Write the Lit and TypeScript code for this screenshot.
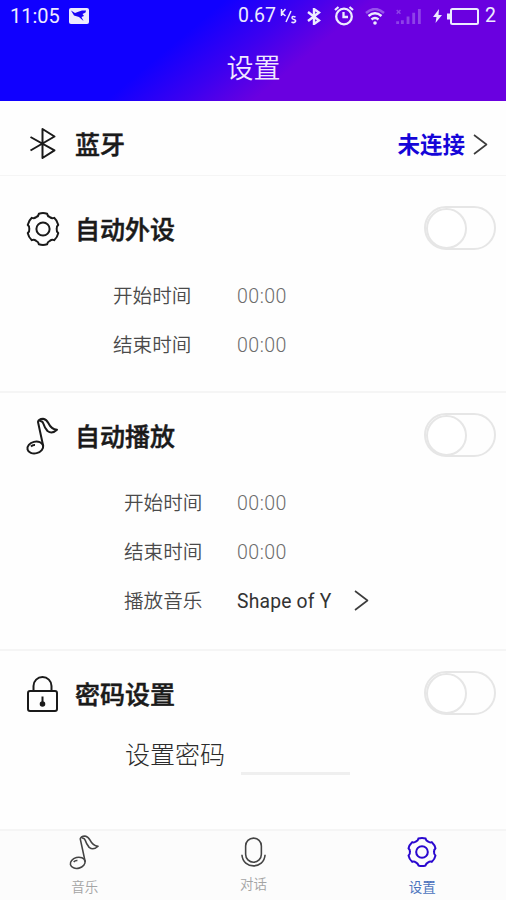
import { LitElement, html, css, svg, nothing } from "lit";
import { customElement, property } from "lit/decorators.js";

const CJK = css`Roboto, "Noto Sans CJK SC", sans-serif`;

// Outline of a six-lobed cog around (17, 17).
const polar = (deg: number, r: number) => {
  const a = (deg * Math.PI) / 180;
  return `${(17 + r * Math.sin(a)).toFixed(2)} ${(17 - r * Math.cos(a)).toFixed(2)}`;
};
const cog =
  [0, 60, 120, 180, 240, 300]
    .map(
      (d, i) =>
        `${i ? "L" : "M"}${polar(d - 15, 15.8)} Q${polar(d, 16.6)} ${polar(d + 15, 15.8)} Q${polar(d + 19, 13.6)} ${polar(d + 30, 13.7)} Q${polar(d + 41, 13.6)} ${polar(d + 45, 15.8)}`,
    )
    .join(" ") + " Z";

const shapes = {
  bluetooth: svg`<path d="M4.500 10 L28.500 23.300 L16.500 31 V2 L28.500 9.500 L4.500 23.500"/>`,
  gear: svg`<path d=${cog}/><circle cx="17" cy="17" r="6.600"/>`,
  note: svg`<ellipse cx="9.300" cy="29.500" rx="8" ry="5.800" transform="rotate(-14 9.300 29.500)"/><path d="M17.300 28.500 L12 4 Q12.500 1 17 .800 Q20.500 1.500 22.300 5 Q25.500 11.500 31 11.800 Q26 16.500 21.500 13 Q18.500 9.500 17.300 5.500 Q16.300 2.500 13.500 3 M5 28.500 Q6.500 26.800 9 27"/>`,
  lock: svg`<rect x="2" y="15" width="29" height="20" rx="2"/><path d="M7.500 15 V10 A9 9 0 0 1 25.500 10 V15"/><path d="M16.500 20.500 V27"/><circle cx="16.500" cy="28" r="1.800" fill="currentColor"/>`,
  mic: svg`<rect x="5" y="1" width="17" height="26" rx="8.500"/><path d="M1 19 C2 35 25 35 26 19"/>`,
  chevron: svg`<path d="M1 1 L13.500 10.500 L1 20"/>`,
};

@customElement("line-icon")
class LineIcon extends LitElement {
  @property() name: keyof typeof shapes = "gear";
  @property() box = "0 0 34 36";
  static styles = css`
    :host { display: block; flex: none; }
    svg { display: block; width: 100%; height: 100%; overflow: visible; fill: none;
      stroke: currentColor; stroke-width: var(--stroke, 2); stroke-linejoin: round; }
  `;
  render() {
    return html`<svg viewBox=${this.box}>${shapes[this.name]}</svg>`;
  }
}

@customElement("toggle-switch")
class ToggleSwitch extends LitElement {
  static styles = css`
    :host { display: block; box-sizing: border-box; width: 72px; height: 44px;
      border: 2px solid #e6e6e6; border-radius: 22px; margin-top: -2px; }
    .knob { box-sizing: border-box; width: 41px; height: 41px; margin: -0.5px 0 0 -0.5px;
      border: 2px solid #e6e6e6; border-radius: 50%; background: #fff; }
  `;
  render() {
    return html`<div class="knob"></div>`;
  }
}

@customElement("status-bar")
class StatusBar extends LitElement {
  static styles = css`
    :host { display: flex; align-items: center; height: 32px; padding: 0 9px 0 10px;
      color: #ecebff; font: 400 19.500px/34px ${CJK}; }
    svg { display: block; flex: none; fill: none; stroke: currentColor; }
    .time { width: 59px; font-size: 20px; }
    .speed { margin-left: auto; width: 42px; }
    .unit { width: 17px; }
    .bt { margin-left: 10px; }
    .alarm { margin-left: 13px; }
    .wifi { margin-left: 11px; }
    .signal { margin-left: 10px; opacity: 0.28; }
    .bolt { margin-left: 11px; }
    .battery { margin-left: 5px; }
    .level { margin-left: 6px; width: 12px; }
  `;
  render() {
    return html`
      <span class="time">11:05</span>
      <svg width="20" height="16" viewBox="0 0 20 16"><rect x="0" y="0" width="20" height="16" rx="2" fill="currentColor" stroke="none"/><path d="M2 2.500 L6 5 L10 3.500 L13 2.500 H17 L16.500 4.500 L13.500 6 L15 8 L12.500 9 L14.500 13 L10 9 L5 7.500 Z" fill="#1804f5" stroke="none"/></svg>
      <span class="speed">0.67</span>
      <svg class="unit" width="17" height="17" viewBox="0 0 17 17" stroke-width="1.500"><path d="M1.500 1 V8 M5.500 1 L2 5 L5.500 8 M11 3 L6 14 M15.500 9 Q12 7.500 12 10 Q12 11 14 11.500 Q16 12 15.500 13.500 Q14 15.500 11.500 14"/></svg>
      <svg class="bt" width="14" height="17" viewBox="0 0 14 17" stroke-width="2.400"><path d="M1 4 L12 12.500 L7 16 V1 L12 4.500 L1 13"/></svg>
      <svg class="alarm" width="20" height="20" viewBox="0 0 20 20" stroke-width="2.300"><circle cx="10" cy="10.500" r="7.800"/><path d="M9.500 6 V11 H14 M1 4 L4.500 1 M19 4 L15.500 1"/></svg>
      <svg class="wifi" width="20" height="17" viewBox="0 0 20 17" stroke-width="2.400"><path opacity=".35" d="M1 5 Q10 -3 19 5"/><path d="M3.500 8 Q10 2.500 16.500 8 M6.500 11.500 Q10 8.500 13.500 11.500"/><circle cx="10" cy="15" r="1.800" fill="currentColor" stroke="none"/></svg>
      <svg class="signal" width="27" height="17" viewBox="0 0 27 18" stroke-width="3"><path d="M7 17 V13 M13 17 V9 M19 17 V5 M25 17 V1 M2 17 V14"/><path stroke-width="1.500" d="M1 2 L5 6 M5 2 L1 6"/></svg>
      <svg class="bolt" width="9" height="14" viewBox="0 0 9 14"><path d="M6 0 L0 8 H3.500 L2.500 14 L9 6 H5.500 Z" fill="currentColor" stroke="none"/></svg>
      <svg class="battery" width="32" height="17" viewBox="0 0 32 17" stroke-width="2"><rect x="4" y="1" width="27" height="15" rx="1.500"/><path stroke-width="3" d="M1.500 5.500 V11.500"/></svg>
      <span class="level">2</span>
    `;
  }
}

@customElement("app-root")
class AppRoot extends LitElement {
  static styles = css`
    :host { display: flex; flex-direction: column; height: 900px; background: #fefefe;
      color: #1a1a1a; font-family: ${CJK}; overflow: hidden; }
    .header { height: 101px; color: #f0eaff;
      background: linear-gradient(140deg, #1000ff 145px, #3c00f0 195px, #6a00e0 240px); }
    .header h1 { margin: 7px 0 0; padding-left: 1px; text-align: center; font-size: 27px;
      font-weight: 350; line-height: 60px; }
    .section { box-sizing: border-box; border-bottom: 2px solid #f5f5f5; }
    .bluetooth { height: 75px; padding-top: 18px; border-bottom-width: 1px; }
    .device { height: 217px; padding-top: 28px; }
    .play { height: 258px; padding-top: 18px; }
    .password { flex: 1; padding-top: 18px; border: 0; }
    .head { display: flex; align-items: center; height: 50px; padding: 0 10px 0 26px; }
    .head h2 { flex: 1; margin: 3px 0 0 15px; font-size: 25px; font-weight: 500;
      line-height: 50px; -webkit-text-stroke: 0.5px currentColor; }
    .icon { width: 34px; height: 36px; }
    .status { color: #1505d8; font-size: 22.500px; font-weight: 700; margin-top: -2px; }
    .chevron { width: 14px; height: 21px; --stroke: 1.600; color: #3c3c3c; }
    .to-device { margin: 0 9px 0 8px; }
    .rows { margin: 17px 0 0 113px; }
    .rows.inset { margin-left: 124px; }
    .row { display: flex; align-items: center; height: 49px; font-size: 19.600px; }
    .label { width: 124px; color: #4a4a4a; font-weight: 350; margin-top: -2px; }
    .inset .label { width: 113px; }
    .value { color: #6c6c6c; font-weight: 300; letter-spacing: 0.450px; margin-top: 2px; }
    .song { width: 117px; color: #333; font-weight: 400; font-size: 19.300px;
      letter-spacing: 0.200px; }
    .secret { display: flex; margin-left: 125px; height: 62px; align-items: center;
      font-size: 25px; font-weight: 300; color: #2c2c2c; margin-top: 3px; }
    .input { width: 109px; height: 40px; margin-left: 16px; border-bottom: 3px solid #efefef; }
    .nav { display: grid; grid-template-columns: repeat(3, 1fr); height: 69px;
      border-top: 2px solid #f5f5f5; background: #fcfcfc; box-sizing: content-box; }
    .tab { display: flex; flex-direction: column; align-items: center; color: #444;
      font-size: 13.500px; line-height: 20px; --stroke: 1.700; }
    .tab span { color: #a4a4a4; font-weight: 350; margin-left: 1px; }
    .tab-icon { width: 30px; height: 36px; margin: 4px 0 6px; }
    .tab.mic .tab-icon { width: 25px; height: 32px; margin: 5px 0 6px 1px; }
    .tab.active { color: #2a08cf; --stroke: 2.300; }
    .tab.active span { color: #4a72bc; font-weight: 400; }
    .tab.active .tab-icon { width: 30px; height: 30px; margin: 6px 0 10px 1px; }
  `;

  private row(label: string, value: string, song = false) {
    return html`<div class="row">
      <span class="label">${label}</span>
      <span class="value ${song ? "song" : ""}">${value}</span>
      ${song ? html`<line-icon class="chevron" name="chevron" box="0 0 14 21"></line-icon>` : nothing}
    </div>`;
  }

  private head(icon: string, title: string, end: unknown = html`<toggle-switch></toggle-switch>`) {
    return html`<div class="head">
      <line-icon class="icon" name=${icon} box=${icon === "gear" || icon === "bluetooth" ? "0 -1 34 36" : "0 0 34 36"}></line-icon>
      <h2>${title}</h2>${end}
    </div>`;
  }

  render() {
    return html`
      <header class="header"><status-bar></status-bar><h1>设置</h1></header>
      <section class="section bluetooth">
        ${this.head("bluetooth", "蓝牙", html`<span class="status">未连接</span>
          <line-icon class="chevron to-device" name="chevron" box="0 0 14 21"></line-icon>`)}
      </section>
      <section class="section device">
        ${this.head("gear", "自动外设")}
        <div class="rows">${this.row("开始时间", "00:00")}${this.row("结束时间", "00:00")}</div>
      </section>
      <section class="section play">
        ${this.head("note", "自动播放")}
        <div class="rows inset">
          ${this.row("开始时间", "00:00")}${this.row("结束时间", "00:00")}${this.row("播放音乐", "Shape of Y", true)}
        </div>
      </section>
      <section class="section password">
        ${this.head("lock", "密码设置")}
        <div class="secret">设置密码<div class="input"></div></div>
      </section>
      <nav class="nav">
        <div class="tab"><line-icon class="tab-icon" name="note" box="0 0 32 38"></line-icon><span>音乐</span></div>
        <div class="tab mic"><line-icon class="tab-icon" name="mic" box="0 0 27 32"></line-icon><span>对话</span></div>
        <div class="tab active"><line-icon class="tab-icon" name="gear" box="0 0 34 34"></line-icon><span>设置</span></div>
      </nav>
    `;
  }
}
